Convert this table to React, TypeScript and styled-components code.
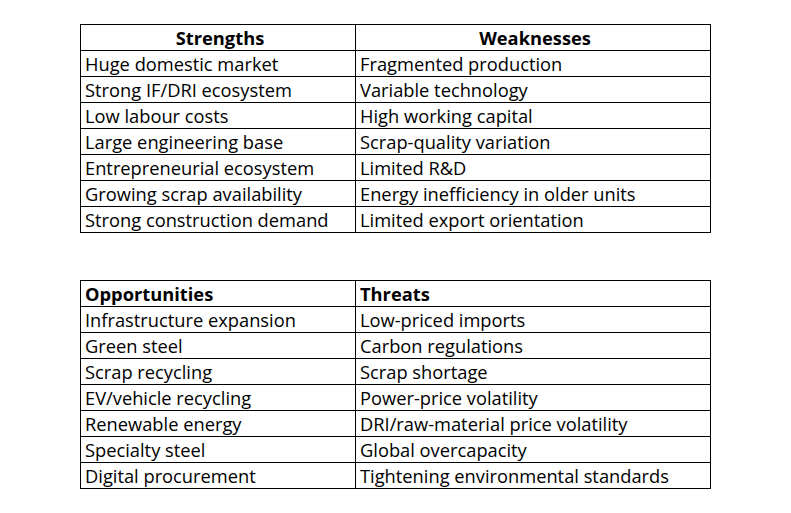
import React from "react";
import styled, { createGlobalStyle } from "styled-components";

const GlobalStyle = createGlobalStyle`
  html, body {
    margin: 0;
    padding: 0;
    background: #fff;
  }
`;

type Pair = [string, string];

const strengthsWeaknesses: Pair[] = [
  ["Huge domestic market", "Fragmented production"],
  ["Strong IF/DRI ecosystem", "Variable technology"],
  ["Low labour costs", "High working capital"],
  ["Large engineering base", "Scrap-quality variation"],
  ["Entrepreneurial ecosystem", "Limited R&D"],
  ["Growing scrap availability", "Energy inefficiency in older units"],
  ["Strong construction demand", "Limited export orientation"],
];

const opportunitiesThreats: Pair[] = [
  ["Infrastructure expansion", "Low-priced imports"],
  ["Green steel", "Carbon regulations"],
  ["Scrap recycling", "Scrap shortage"],
  ["EV/vehicle recycling", "Power-price volatility"],
  ["Renewable energy", "DRI/raw-material price volatility"],
  ["Specialty steel", "Global overcapacity"],
  ["Digital procurement", "Tightening environmental standards"],
];

const SwotTable = ({
  heads,
  rows,
  centered,
}: {
  heads: Pair;
  rows: Pair[];
  centered?: boolean;
}) => (
  <Table>
    <colgroup>
      <col style={{ width: 275 }} />
      <col style={{ width: 355 }} />
    </colgroup>
    <thead>
      <tr>
        <HeadCell $centered={centered}>{heads[0]}</HeadCell>
        <HeadCell $centered={centered}>{heads[1]}</HeadCell>
      </tr>
    </thead>
    <tbody>
      {rows.map(([a, b]) => (
        <tr key={a}>
          <Cell>{a}</Cell>
          <Cell>{b}</Cell>
        </tr>
      ))}
    </tbody>
  </Table>
);

export default function App() {
  return (
    <>
      <GlobalStyle />
      <Sheet>
        <SwotTable
          heads={["Strengths", "Weaknesses"]}
          rows={strengthsWeaknesses}
          centered
        />
        <SwotTable heads={["Opportunities", "Threats"]} rows={opportunitiesThreats} />
      </Sheet>
    </>
  );
}

const Sheet = styled.div`
  display: flex;
  flex-direction: column;
  gap: 47px;
  padding: 24px 0 0 80px;
  font-family: "Open Sans", "Liberation Sans", sans-serif;
  color: #000;
`;

const Table = styled.table`
  border-collapse: collapse;
  table-layout: fixed;
  width: 631px;
  border: 1px solid #000;
`;

const Cell = styled.td`
  height: 24px;
  padding: 1px 0 0 4px;
  border: 1px solid #000;
  font-size: 18.3px;
  line-height: 24px;
  white-space: nowrap;
  overflow: hidden;
  vertical-align: middle;
`;

const HeadCell = styled(Cell).attrs({ as: "th" })<{ $centered?: boolean }>`
  font-weight: 700;
  text-align: ${(p) => (p.$centered ? "center" : "left")};
`;
